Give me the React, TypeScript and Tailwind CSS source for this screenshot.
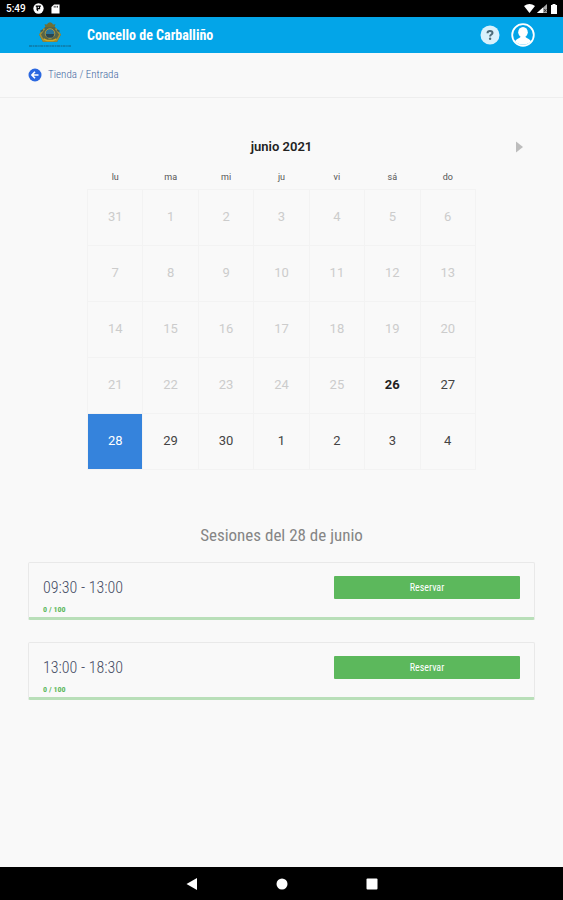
import { useState } from 'react'
import clsx from 'clsx'

const weekdays = ['lu', 'ma', 'mi', 'ju', 'vi', 'sá', 'do']

const weeks = [
  [31, 1, 2, 3, 4, 5, 6],
  [7, 8, 9, 10, 11, 12, 13],
  [14, 15, 16, 17, 18, 19, 20],
  [21, 22, 23, 24, 25, 26, 27],
  [28, 29, 30, 1, 2, 3, 4],
]

// position of 26 june in the grid
const TODAY = 26

const sessions = [
  { time: '09:30 - 13:00', booked: 0, capacity: 100 },
  { time: '13:00 - 18:30', booked: 0, capacity: 100 },
]

function StatusBar() {
  return (
    <div className="flex h-[17px] items-center justify-between bg-black pr-1 pl-[6px] text-white">
      <div className="flex items-center gap-[7px]">
        <span className="font-[Roboto,sans-serif] text-[10px] leading-[17px] font-medium">
          5:49
        </span>
        <svg viewBox="0 0 12 12" className="size-[11px]">
          <circle cx="6" cy="6" r="5.6" fill="#fff" />
          <path
            d="M3 2.6H8.6V4.2H7.8V6.8H5.6V9.4L3.8 7.6V4.2H3Z"
            fill="#000"
          />
          <path d="M5.2 4.2H6.4V5.4H5.2Z" fill="#fff" />
        </svg>
        <svg viewBox="0 0 10 11" className="h-[10px] w-[9px]">
          <path d="M3.4 0.5H9.5V10.5H0.5V3.4Z" fill="#fff" />
          <path d="M3.6 2V4M5.4 2V4M7.2 2V4" stroke="#000" strokeWidth="0.8" />
        </svg>
      </div>
      <div className="flex items-center gap-[2px]">
        <svg viewBox="0 0 11 9" className="h-[9px] w-[11px]">
          <path d="M0 2Q5.5 -2 11 2L5.5 9Z" fill="#fff" />
        </svg>
        <svg viewBox="0 0 10 9" className="h-[9px] w-[10px]">
          <path d="M0 9L10 0V9Z" fill="#aaa" />
          <path d="M0 9L6 3.6V9Z" fill="#fff" />
          <path d="M7 5L9.5 8M9.5 5L7 8" stroke="#222" strokeWidth="0.8" />
        </svg>
        <svg viewBox="0 0 10 10" className="size-[10px]">
          <path d="M3.5 0H6.5V1H8V10H2V1H3.5Z" fill="#fff" />
        </svg>
      </div>
    </div>
  )
}

function Crest() {
  return (
    <svg viewBox="0 0 44 26" className="h-[26px] w-11" aria-hidden="true">
      <path
        d="M17.5 5.2L16.5 2.2L19 2.6L20 1L22 0.3L24 1L25 2.6L27.5 2.2L26.5 5.2Z"
        fill="#6f7035"
      />
      <path d="M17 5H27L33 12.5L29 20H15L11 12.5Z" fill="#55644a" />
      <path
        d="M16.5 6.5L12 12.5L15.5 19H28.5L32 12.5L27.5 6.5"
        fill="none"
        stroke="#a38f35"
        strokeWidth="1.6"
      />
      <path
        d="M12.5 9.5L15 8M31.5 9.5L29 8"
        stroke="#3d5f5c"
        strokeWidth="1.5"
      />
      <circle cx="22" cy="11.5" r="4.8" fill="#2a7599" stroke="#b0973a" />
      <path d="M17.7 12H26.3L25 15.5H19Z" fill="#2b454f" />
      <path
        d="M15.5 17L19 18.5H25L28.5 17"
        fill="none"
        stroke="#d0a821"
        strokeWidth="1.5"
      />
      <path
        d="M1 24H43"
        stroke="#17617f"
        strokeWidth="1.2"
        strokeDasharray="3 0.6 1.5 0.5"
      />
    </svg>
  )
}

function Header() {
  return (
    <header className="flex h-9 items-center bg-[#03a5e8] px-7 text-white">
      <Crest />
      <h1 className="ml-[15px] flex-1 text-[14px] leading-5 font-bold">
        Concello de Carballiño
      </h1>
      <div className="flex items-center gap-[11px]">
        <button type="button" aria-label="Ayuda">
          <svg viewBox="0 0 20 20" className="block size-5">
            <circle cx="10" cy="10" r="9.5" fill="#d9f1fc" />
            <path
              d="M7.5 8.2Q7.5 6 10 6T12.5 8C12.5 9.6 10.1 9.5 10.1 11.5"
              fill="none"
              stroke="#4c6a78"
              strokeWidth="2"
            />
            <circle cx="10.1" cy="13.8" r="1.2" fill="#4c6a78" />
          </svg>
        </button>
        <button type="button" aria-label="Mi cuenta">
          <svg viewBox="0 0 24 24" className="block size-6">
            <circle
              cx="12"
              cy="12"
              r="10.8"
              fill="none"
              stroke="#fff"
              strokeWidth="1.8"
            />
            <ellipse cx="12" cy="9.3" rx="4.8" ry="5.3" fill="#fff" />
            <path
              d="M4 18.3C5.5 15.5 8 15.5 9.5 14H14.5C16 15.5 18.5 15.5 20 18.3C16.5 22.8 7.5 22.8 4 18.3Z"
              fill="#fff"
            />
          </svg>
        </button>
      </div>
    </header>
  )
}

function Breadcrumb() {
  return (
    <nav className="flex h-[45px] items-center border-b border-[#eeeeee] pl-7">
      <a href="#tienda" className="flex items-center gap-[6px] text-[#3f66a0]">
        <svg viewBox="0 0 14 14" className="size-[14px]" aria-hidden="true">
          <circle cx="7" cy="7" r="6.5" fill="#2b68e0" />
          <path
            d="M7 3.8L3.9 7L7 10.2M4.2 7H10.5"
            fill="none"
            stroke="#fff"
            strokeWidth="1.6"
          />
        </svg>
        <span className="text-[11px] leading-4 font-light">
          Tienda / Entrada
        </span>
      </a>
    </nav>
  )
}

function Calendar({
  selected,
  onSelect,
}: {
  selected: number
  onSelect: (index: number) => void
}) {
  return (
    <section className="font-[Roboto,sans-serif]">
      <div className="grid h-5 grid-cols-[1fr_auto_1fr] items-center px-10">
        <h2 className="col-start-2 text-[13px] leading-5 font-semibold text-[#222]">
          junio 2021
        </h2>
        <button
          type="button"
          aria-label="Mes siguiente"
          className="justify-self-end"
        >
          <svg viewBox="0 0 7 12" className="block h-3 w-[7px]">
            <path d="M0 0.5L7 6L0 11.5Z" fill="#bdbdbd" />
          </svg>
        </button>
      </div>
      <div className="mt-2 px-[87px]">
        <table className="w-full table-fixed border-collapse text-center">
          <thead>
            <tr className="h-6 text-[9px] text-[#555]">
              {weekdays.map((day) => (
                <th key={day} scope="col" className="p-0 pt-0.5 font-normal">
                  {day}
                </th>
              ))}
            </tr>
          </thead>
          <tbody>
            {weeks.map((week, row) => (
              <tr key={row} className="h-14">
                {week.map((day, col) => {
                  const index = row * 7 + col
                  const isPast = index < TODAY
                  const isToday = index === TODAY
                  const isSelected = index === selected
                  return (
                    <td key={col} className="border border-[#f3f3f3] p-0">
                      <button
                        type="button"
                        disabled={isPast}
                        onClick={() => onSelect(index)}
                        className={clsx(
                          'block h-[55px] w-full text-[13px]',
                          isPast && 'text-[#cccccc]',
                          isToday && 'font-bold',
                          isSelected && 'bg-[#3583dc] text-white',
                          !isSelected && isToday && 'text-[#222]',
                          !isSelected && index > TODAY && 'text-[#444]'
                        )}
                      >
                        {day}
                      </button>
                    </td>
                  )
                })}
              </tr>
            ))}
          </tbody>
        </table>
      </div>
    </section>
  )
}

function Session({
  time,
  booked,
  capacity,
}: {
  time: string
  booked: number
  capacity: number
}) {
  return (
    <li className="flex h-[58px] justify-between rounded-xs border border-b-3 border-[#e9e9e9] border-b-[#b9dfb9] px-[14px]">
      <div>
        <p className="mt-[15px] text-[16px] leading-5 font-light text-[#454c64]">
          {time}
        </p>
        <p className="mt-[7px] text-[8px] leading-[10px] font-bold text-[#5cb85c]">
          {booked} / {capacity}
        </p>
      </div>
      <button
        type="button"
        className="mt-[13px] h-[23px] w-[39%] rounded-[1px] bg-[#5cb85c] text-[10px] text-white"
      >
        Reservar
      </button>
    </li>
  )
}

function NavigationBar() {
  return (
    <div className="flex h-[33px] items-center justify-center gap-[78px] bg-black">
      <button type="button" aria-label="Atrás">
        <svg viewBox="0 0 12 12" className="block size-3">
          <path d="M0.5 6L11 0V12Z" fill="#fff" />
        </svg>
      </button>
      <button type="button" aria-label="Inicio">
        <svg viewBox="0 0 12 12" className="block size-3">
          <circle cx="6" cy="6" r="5.5" fill="#fff" />
        </svg>
      </button>
      <button type="button" aria-label="Recientes">
        <svg viewBox="0 0 12 12" className="block size-3">
          <rect x="0.5" y="0.5" width="11" height="11" rx="1" fill="#fff" />
        </svg>
      </button>
    </div>
  )
}

export default function App() {
  const [selected, setSelected] = useState<number>(28)

  return (
    <div className="flex min-h-screen flex-col bg-[#f9f9f9] font-['Roboto_Condensed','Liberation_Sans_Narrow',Roboto,sans-serif]">
      <StatusBar />
      <Header />
      <Breadcrumb />
      <main className="flex-1 pt-[39px]">
        <Calendar selected={selected} onSelect={setSelected} />
        <section className="mt-[53px] px-7">
          <h2 className="text-center text-[17px] leading-6 text-[#858585]">
            Sesiones del 28 de junio
          </h2>
          <ul className="mt-[15px] flex flex-col gap-[22px]">
            {sessions.map((session) => (
              <Session key={session.time} {...session} />
            ))}
          </ul>
        </section>
      </main>
      <NavigationBar />
    </div>
  )
}
